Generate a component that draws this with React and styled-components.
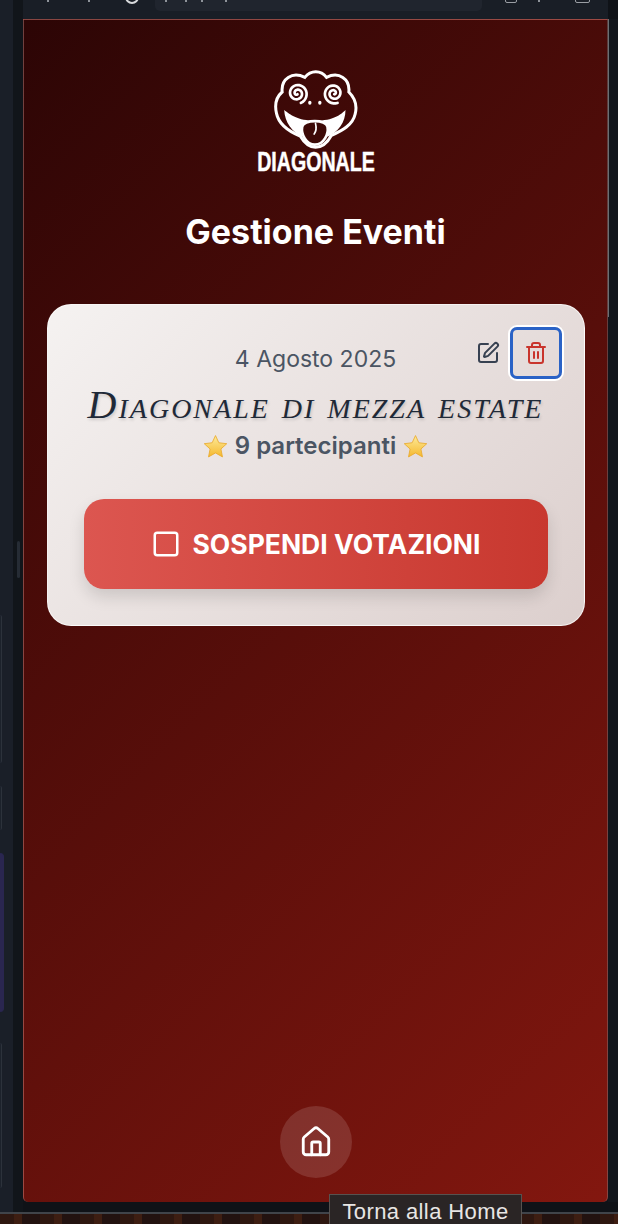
import styled, { createGlobalStyle } from "styled-components";
import { House, Square, SquarePen, Trash2 } from "lucide-react";

const GlobalStyle = createGlobalStyle`
  html, body {
    margin: 0;
    padding: 0;
    background: #14181f;
  }
  body {
    font-family: Inter, "Liberation Sans", sans-serif;
    overflow: hidden;
  }
`;

// archimedean spiral for the frog eyes
function spiral(cx, cy, maxR, turns, dir) {
  const steps = 60;
  let d = "";
  for (let i = 0; i <= steps; i++) {
    const t = i / steps;
    const a = t * turns * Math.PI * 2 * dir + 1.2;
    const r = 3 + t * (maxR - 3);
    d += `${i === 0 ? "M" : "L"}${(cx + Math.cos(a) * r).toFixed(1)} ${(cy + Math.sin(a) * r).toFixed(1)} `;
  }
  return d;
}

function FrogLogo() {
  return (
    <FrogSvg viewBox="130 40 260 240">
      <path
        d="M143 170 C136 140 146 118 160 106 C156 66 190 44 228 62 C246 40 276 40 293 62 C330 44 364 66 360 106 C376 122 386 145 379 172 C372 205 340 222 308 236 C296 258 280 272 260 272 C240 272 226 258 214 238 C180 224 150 205 143 170 Z"
        fill="none"
        stroke="#fff"
        strokeWidth="9"
      />
      <path
        d="M166 160 C185 174 205 192 260 192 C315 192 335 174 350 160 C350 198 328 226 296 240 L288 205 L226 205 L220 240 C190 226 168 198 166 160 Z"
        fill="#fff"
      />
      <path
        d="M220 210 C224 188 292 188 296 210 C300 230 286 264 258 264 C232 264 216 232 220 210 Z"
        fill="#3d0a07"
        stroke="#fff"
        strokeWidth="8"
      />
      <path d="M260 200 C263 212 262 224 256 232" stroke="#fff" strokeWidth="5" fill="none" strokeLinecap="round" />
      <path d={spiral(205, 110, 31, 2, 1)} fill="none" stroke="#fff" strokeWidth="8" strokeLinecap="round" />
      <path d={spiral(315, 110, 31, 2, -1)} fill="none" stroke="#fff" strokeWidth="8" strokeLinecap="round" />
      <ellipse cx="243" cy="138" rx="5" ry="6" fill="#fff" />
      <ellipse cx="273" cy="138" rx="5" ry="6" fill="#fff" />
    </FrogSvg>
  );
}

function Star() {
  return (
    <StarSvg viewBox="0 0 24 24">
      <defs>
        <linearGradient id="starFill" x1="0" y1="0" x2="0" y2="1">
          <stop offset="0" stopColor="#fdeb9a" />
          <stop offset="1" stopColor="#f5b82e" />
        </linearGradient>
      </defs>
      <path
        d="M12 1.5 L15.2 8.4 L22.8 9.3 L17.2 14.4 L18.7 22 L12 18.2 L5.3 22 L6.8 14.4 L1.2 9.3 L8.8 8.4 Z"
        fill="url(#starFill)"
        stroke="#e9a92c"
        strokeWidth="0.8"
        strokeLinejoin="round"
      />
    </StarSvg>
  );
}

export default function App() {
  return (
    <Screen>
      <GlobalStyle />
      <Workspace>
        <SideRail>
          <RailPanel $height={148} />
          <RailPanel $height={44} />
          <RailPanel $height={159} $accent />
          <RailPanel $height={145} $pushed />
        </SideRail>
        <Gutter>
          <GutterHandle />
        </Gutter>
        <BrowserColumn>
          <TopBar>
            <ChromeDot $left={24} />
            <ChromeDot $left={39} />
            <ChromeRing $left={35} />
            <UrlField>
              <ChromeDot $left={0} />
              <ChromeDot $left={18} />
              <ChromeDot $left={14} />
              <ChromeDot $left={22} />
            </UrlField>
            <ChromeTab $left={23} $width={12} />
            <ChromeDot $left={21} />
            <ChromeTab $left={35} $width={15} />
          </TopBar>
          <ViewportRow>
            <Viewport>
              <LogoBlock>
                <FrogLogo />
                <LogoText>DIAGONALE</LogoText>
              </LogoBlock>
              <PageTitle>Gestione Eventi</PageTitle>
              <EventCard>
                <CardActions>
                  <IconButton aria-label="Modifica">
                    <SquarePen size={24} color="#374151" />
                  </IconButton>
                  <IconButton aria-label="Elimina" $focused>
                    <Trash2 size={24} color="#c9352d" />
                  </IconButton>
                </CardActions>
                <EventDate>4 Agosto 2025</EventDate>
                <EventName>Diagonale di mezza estate</EventName>
                <Participants>
                  <Star />
                  9 partecipanti
                  <Star />
                </Participants>
                <SuspendButton>
                  <Square size={30} strokeWidth={2} />
                  SOSPENDI VOTAZIONI
                </SuspendButton>
              </EventCard>
              <HomeButton aria-label="Torna alla Home">
                <House size={34} strokeWidth={2} color="#fff" />
              </HomeButton>
            </Viewport>
            <RightEdge>
              <ScrollLine />
            </RightEdge>
          </ViewportRow>
        </BrowserColumn>
      </Workspace>
      <BottomStrip />
      <Tooltip>Torna alla Home</Tooltip>
    </Screen>
  );
}

const Screen = styled.div`
  position: relative;
  width: 618px;
  height: 1224px;
  overflow: hidden;
  display: flex;
  flex-direction: column;
  background: #0f1217;
`;

const Workspace = styled.div`
  flex: 1;
  display: flex;
  min-height: 0;
`;

const SideRail = styled.div`
  width: 13px;
  background: #1a1f28;
  display: flex;
  flex-direction: column;
  padding-top: 615px;
  box-sizing: border-box;
  gap: 23px;
`;

const RailPanel = styled.div`
  width: ${(p) => (p.$accent ? "4px" : "2px")};
  height: ${(p) => p.$height}px;
  margin-top: ${(p) => (p.$pushed ? "8px" : "0")};
  box-sizing: border-box;
  border-radius: 0 4px 4px 0;
  background: ${(p) => (p.$accent ? "#2a2650" : "#1c222b")};
  border-right: 1px solid ${(p) => (p.$accent ? "#2a2650" : "#2c323b")};
`;

const Gutter = styled.div`
  width: 10px;
  background: #11151a;
  display: flex;
  justify-content: center;
  padding-top: 541px;
  box-sizing: border-box;
`;

const GutterHandle = styled.div`
  width: 3px;
  height: 37px;
  border-radius: 2px;
  background: #262c35;
`;

const BrowserColumn = styled.div`
  flex: 1;
  display: flex;
  flex-direction: column;
  padding-bottom: 10px;
  background: #0f1217;
`;

const TopBar = styled.div`
  height: 19px;
  width: 585px;
  background: #191e26;
  flex-shrink: 0;
  display: flex;
  overflow: hidden;
`;

const ChromeDot = styled.div`
  margin-left: ${(p) => p.$left}px;
  width: 2px;
  height: 2px;
  background: #8e939a;
  flex-shrink: 0;
`;

const ChromeRing = styled.div`
  margin-left: ${(p) => p.$left}px;
  margin-top: -10px;
  width: 14px;
  height: 14px;
  box-sizing: border-box;
  border-radius: 50%;
  border: 2px solid #d8dadc;
  flex-shrink: 0;
`;

const ChromeTab = styled.div`
  margin-left: ${(p) => p.$left}px;
  margin-top: -8px;
  width: ${(p) => p.$width}px;
  height: 11px;
  box-sizing: border-box;
  border: 1px solid #9a9ea4;
  border-radius: 2px;
  flex-shrink: 0;
`;

const UrlField = styled.div`
  margin-left: 16px;
  width: 327px;
  height: 11px;
  flex-shrink: 0;
  display: flex;
  padding-left: 10px;
  box-sizing: border-box;
  border-radius: 0 0 5px 5px;
  background: #20252e;
`;

const ViewportRow = styled.div`
  flex: 1;
  display: flex;
  min-height: 0;
`;

const Viewport = styled.div`
  width: 585px;
  box-sizing: border-box;
  display: flex;
  flex-direction: column;
  align-items: center;
  border: 1px solid rgba(255, 255, 255, 0.22);
  border-bottom: none;
  border-radius: 0 0 5px 5px;
  background: linear-gradient(135deg, #2c0505 0%, #83170f 100%);
`;

const RightEdge = styled.div`
  flex: 1;
  background: #12161c;
`;

const ScrollLine = styled.div`
  width: 1px;
  height: 298px;
  background: #6b6e72;
`;

const LogoBlock = styled.div`
  margin-top: 50px;
  display: flex;
  flex-direction: column;
  align-items: center;
`;

const FrogSvg = styled.svg`
  width: 87px;
  height: 80px;
  display: block;
`;

const LogoText = styled.div`
  margin-top: 0;
  font-family: "Liberation Sans", sans-serif;
  font-weight: 700;
  font-size: 28px;
  line-height: 24px;
  white-space: nowrap;
  color: #fff;
  -webkit-text-stroke: 0.5px #fff;
  transform: scaleX(0.7);
`;

const PageTitle = styled.h1`
  margin: 36px 0 0;
  font-size: 34px;
  line-height: 44px;
  font-weight: 700;
  color: #fff;
`;

const EventCard = styled.section`
  position: relative;
  margin-top: 50px;
  width: 538px;
  height: 322px;
  box-sizing: border-box;
  padding: 39px 37px 0;
  display: flex;
  flex-direction: column;
  align-items: center;
  border-radius: 24px;
  border: 1px solid rgba(255, 255, 255, 0.7);
  background: linear-gradient(135deg, #f5f2f1 0%, #dccfcd 100%);
`;

const CardActions = styled.div`
  position: absolute;
  top: 22px;
  right: 22px;
  display: flex;
  align-items: center;
  gap: 4px;
`;

const IconButton = styled.button`
  width: ${(p) => (p.$focused ? "52px" : "36px")};
  height: ${(p) => (p.$focused ? "52px" : "36px")};
  padding: 0;
  display: flex;
  align-items: center;
  justify-content: center;
  background: transparent;
  border-radius: 7px;
  box-sizing: border-box;
  border: ${(p) => (p.$focused ? "3px solid #2a62c6" : "none")};
  box-shadow: ${(p) => (p.$focused ? "0 0 0 2px #fff" : "none")};
`;

const EventDate = styled.div`
  font-size: 23px;
  line-height: 30px;
  color: #4b5563;
`;

const EventName = styled.h2`
  margin: 11px 0 0;
  font-family: "Liberation Serif", serif;
  font-style: italic;
  font-variant: small-caps;
  font-weight: 400;
  font-size: 40px;
  line-height: 40px;
  letter-spacing: 2px;
  white-space: nowrap;
  color: #1f2937;
  text-shadow: 1px 2px 3px rgba(0, 0, 0, 0.15);
`;

const Participants = styled.div`
  margin-top: 5px;
  display: flex;
  align-items: center;
  gap: 7px;
  font-size: 24px;
  line-height: 32px;
  font-weight: 600;
  color: #4b5563;
`;

const StarSvg = styled.svg`
  width: 25px;
  height: 25px;
`;

const SuspendButton = styled.button`
  margin-top: 37px;
  width: 464px;
  height: 90px;
  flex-shrink: 0;
  display: flex;
  align-items: center;
  justify-content: center;
  gap: 12px;
  border: none;
  border-radius: 20px;
  color: #fff;
  font-family: inherit;
  font-size: 26.5px;
  font-weight: 700;
  background: linear-gradient(90deg, #dc5650 0%, #c8382f 100%);
  box-shadow: 0 8px 16px rgba(0, 0, 0, 0.13);
`;

const HomeButton = styled.button`
  margin-top: auto;
  margin-bottom: 24px;
  width: 72px;
  height: 72px;
  padding: 0;
  border: none;
  border-radius: 50%;
  display: flex;
  align-items: center;
  justify-content: center;
  background: rgba(255, 255, 255, 0.13);
`;

const BottomStrip = styled.div`
  height: 12px;
  flex-shrink: 0;
  border-top: 2px solid #40444a;
  box-sizing: border-box;
  background: repeating-linear-gradient(90deg, #2e1710 0 14px, #3e1e12 14px 22px, #221210 22px 40px);
`;

const Tooltip = styled.div`
  position: absolute;
  left: 329px;
  top: 1194px;
  width: 193px;
  height: 40px;
  box-sizing: border-box;
  padding-top: 4px;
  text-align: center;
  border: 1px solid #57524f;
  background: #2a2525;
  color: #e8e6e4;
  font-family: "Liberation Sans", sans-serif;
  font-size: 22px;
  letter-spacing: 0.4px;
  line-height: 26px;
  white-space: nowrap;
`;
